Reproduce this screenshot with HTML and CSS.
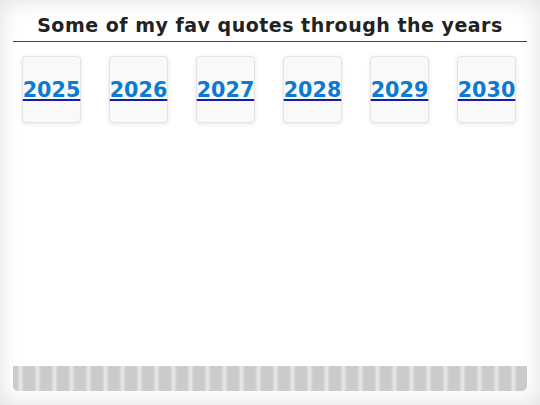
FILE: index.html
```html
<!DOCTYPE html>
<html lang="en">
<head>
<meta charset="utf-8">
<title>Fav quotes</title>
<link rel="stylesheet" href="styles.css">
</head>
<body>
<main class="page">
  <h1 class="title">Some of my fav quotes through the years</h1>
  <nav class="years">
    <div class="year-card"><a href="#2025">2025</a></div>
    <div class="year-card"><a href="#2026">2026</a></div>
    <div class="year-card"><a href="#2027">2027</a></div>
    <div class="year-card"><a href="#2028">2028</a></div>
    <div class="year-card"><a href="#2029">2029</a></div>
    <div class="year-card"><a href="#2030">2030</a></div>
  </nav>
  <footer class="ticker"></footer>
</main>
</body>
</html>
```
FILE: styles.css
```css
html, body {
  margin: 0;
  height: 100%;
}

body {
  background: #ffffff;
  font-family: "DejaVu Sans", Verdana, sans-serif;
  box-shadow: inset 0 0 22px rgba(0, 0, 0, 0.13);
}

.page {
  box-sizing: border-box;
  height: 100vh;
  padding: 0 13px 14px 13px;
  display: flex;
  flex-direction: column;
}

.title {
  margin: 0;
  padding: 14px 0 5px 0;
  font-size: 19px;
  font-weight: bold;
  letter-spacing: 0.5px;
  line-height: 22px;
  text-align: center;
  color: #222222;
  border-bottom: 1.5px solid #444444;
}

.years {
  display: flex;
  gap: 28px;
  padding: 14px 9px 0 9px;
}

.year-card {
  box-sizing: border-box;
  width: 59px;
  height: 67px;
  display: flex;
  align-items: center;
  justify-content: center;
  background: #f9f9f9;
  border: 1px solid #e4e4e4;
  border-radius: 4px;
  box-shadow: 0 1px 4px rgba(0, 0, 0, 0.1);
}

.year-card a {
  font-size: 20.7px;
  font-weight: bold;
  color: #0b7bd2;
  text-decoration: underline;
  text-decoration-color: #1a1ab0;
  text-decoration-thickness: 2px;
  text-underline-offset: 2px;
}

.ticker {
  margin-top: auto;
  height: 25px;
  border-radius: 0 0 5px 5px;
  background: repeating-linear-gradient(
    to right,
    #cbcbcb 0px,
    #cbcbcb 4px,
    #e6e6e6 7px,
    #e6e6e6 8px,
    #cbcbcb 11px,
    #cbcbcb 17px
  );
}
```
